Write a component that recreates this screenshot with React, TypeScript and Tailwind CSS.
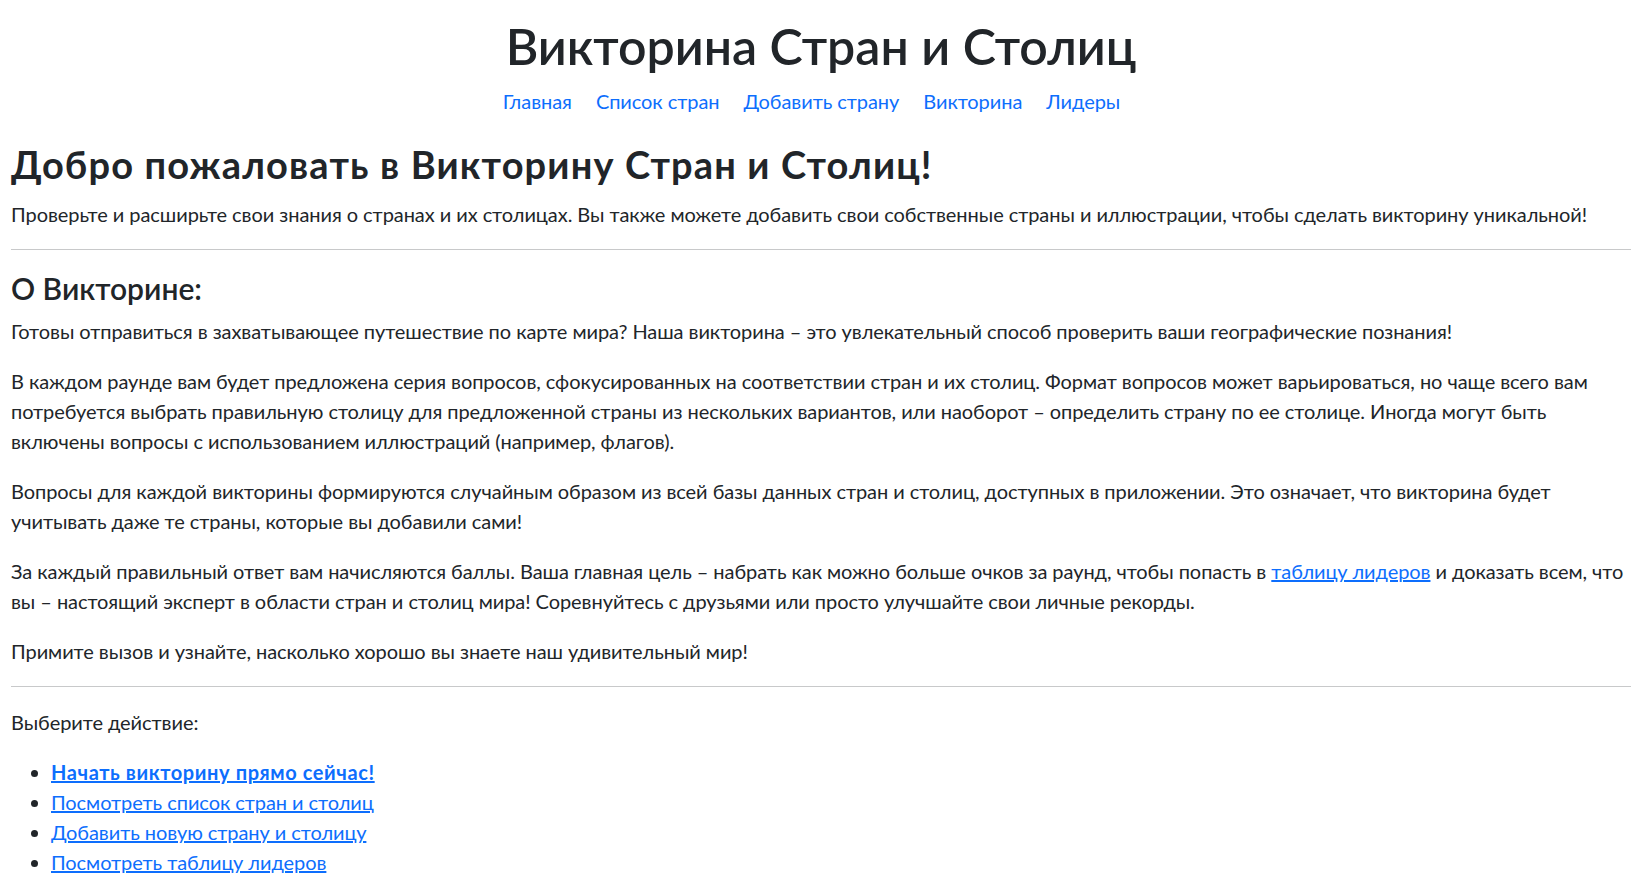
const navLinks = ["Главная", "Список стран", "Добавить страну", "Викторина", "Лидеры"];

const actions = [
  { label: "Начать викторину прямо сейчас!", bold: true },
  { label: "Посмотреть список стран и столиц", bold: false },
  { label: "Добавить новую страну и столицу", bold: false },
  { label: "Посмотреть таблицу лидеров", bold: false },
];

export default function App() {
  return (
    <div className="min-h-screen bg-white pl-[11px] pr-[13px] font-['Lato',sans-serif] text-[20px] leading-[30px] tracking-[-0.06px] text-[#212529]">
      {/* Header */}
      <header className="pt-[16px] text-center">
        <h1 className="text-[50px] leading-[60px] font-semibold tracking-normal">Викторина Стран и Столиц</h1>
        <nav className="mt-[10px] flex justify-center pl-[5px]">
          {navLinks.map((l) => (
            <a key={l} href="#" className="mr-[24px] text-[#0d6efd] no-underline">
              {l}
            </a>
          ))}
        </nav>
      </header>

      <main>
        <h2 className="mt-[27px] text-[38px] leading-[43px] font-bold tracking-[1.15px]">
          Добро пожаловать в Викторину Стран и Столиц!
        </h2>
        <p className="mt-[13px]">
          Проверьте и расширьте свои знания о странах и их столицах. Вы также можете добавить свои собственные
          страны и иллюстрации, чтобы сделать викторину уникальной!
        </p>

        <hr className="mt-[20px] border-t border-[#c8c9ca]" />

        <h3 className="mt-[20px] text-[30px] leading-[36px] font-semibold tracking-normal">О Викторине:</h3>
        <div className="mt-[10px] flex flex-col gap-[20px]">
          <p>
            Готовы отправиться в захватывающее путешествие по карте мира? Наша викторина – это увлекательный
            способ проверить ваши географические познания!
          </p>
          <p>
            В каждом раунде вам будет предложена серия вопросов, сфокусированных на соответствии стран и их
            столиц. Формат вопросов может варьироваться, но чаще всего вам потребуется выбрать правильную столицу
            для предложенной страны из нескольких вариантов, или наоборот – определить страну по ее столице.
            Иногда могут быть включены вопросы с использованием иллюстраций (например, флагов).
          </p>
          <p>
            Вопросы для каждой викторины формируются случайным образом из всей базы данных стран и столиц,
            доступных в приложении. Это означает, что викторина будет учитывать даже те страны, которые вы
            добавили сами!
          </p>
          <p>
            За каждый правильный ответ вам начисляются баллы. Ваша главная цель – набрать как можно больше очков
            за раунд, чтобы попасть в{" "}
            <a href="#" className="text-[#0d6efd] underline">
              таблицу лидеров
            </a>{" "}
            и доказать всем, что вы – настоящий эксперт в области стран и столиц мира! Соревнуйтесь с друзьями
            или просто улучшайте свои личные рекорды.
          </p>
          <p>Примите вызов и узнайте, насколько хорошо вы знаете наш удивительный мир!</p>
        </div>

        <hr className="mt-[20px] border-t border-[#c8c9ca]" />

        <p className="mt-[20px]">Выберите действие:</p>
        <ul className="mt-[20px] list-disc pl-[40px]">
          {actions.map((a) => (
            <li key={a.label}>
              <a
                href="#"
                className={a.bold ? "font-bold tracking-[0.6px] text-[#0d6efd] underline" : "text-[#0d6efd] underline"}
              >
                {a.label}
              </a>
            </li>
          ))}
        </ul>
      </main>
    </div>
  );
}
